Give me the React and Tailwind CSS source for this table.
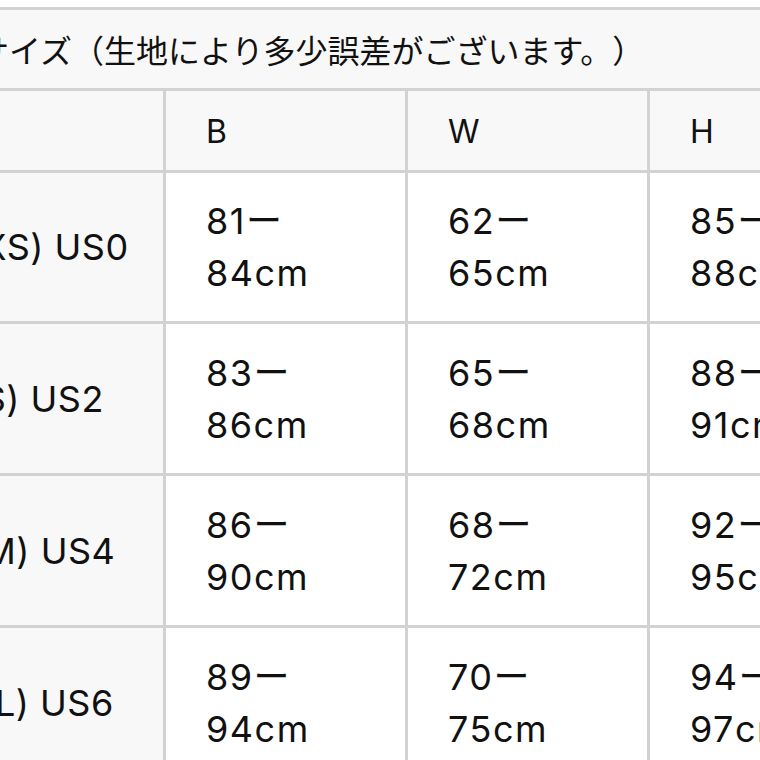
export default function App() {
  const rows = [
    { label: "(XS) US0", shift: "pl-[10px]", b: ["81ー", "84cm"], w: ["62ー", "65cm"], h: ["85ー", "88cm"] },
    { label: "(S) US2", shift: "pr-[14px]", b: ["83ー", "86cm"], w: ["65ー", "68cm"], h: ["88ー", "91cm"] },
    { label: "(M) US4", shift: "pr-[2px]", b: ["86ー", "90cm"], w: ["68ー", "72cm"], h: ["92ー", "95cm"] },
    { label: "(L) US6", shift: "pl-[8px]", b: ["89ー", "94cm"], w: ["70ー", "75cm"], h: ["94ー", "97cm"] },
  ];
  const heights = ["h-[148px]", "h-[149px]", "h-[149px]", "h-[149px]"];
  const font = "font-['Inter','Noto_Sans_CJK_JP',sans-serif]";
  return (
    <div className="w-[760px] h-[760px] overflow-hidden bg-white">
      <div className="pt-[7px] ml-[-79px]">
        <div
          className={`grid grid-cols-[239px_239px_239px_239px] gap-[3px] bg-[#d2d2d2] border-[3px] border-[#d2d2d2] w-[971px] text-[#111] ${font}`}
        >
          <div className="col-span-4 h-[78px] bg-[#f8f8f8] flex items-center pl-[53px] text-[32px] font-['Noto_Sans_CJK_JP',sans-serif] leading-none [text-spacing-trim:space-all]">
            サイズ（生地により多少誤差がございます。）
          </div>
          <div className="h-[79px] bg-[#f8f8f8]" />
          {["B", "W", "H"].map((t) => (
            <div key={t} className="h-[79px] bg-[#f8f8f8] flex items-center pl-[40px] text-[32px] pt-[3px]">
              {t}
            </div>
          ))}
          {rows.map((r, i) => (
            <>
              <div
                key={r.label}
                className={`${heights[i]} ${r.shift} bg-[#f8f8f8] flex items-center justify-center text-[36px] tracking-[0.5px]`}
              >
                {r.label}
              </div>
              {[r.b, r.w, r.h].map((v, j) => (
                <div
                  key={i + "-" + j}
                  className={`${heights[i]} bg-white flex items-center pl-[40px] text-[36px] leading-[52px] tracking-[1.5px]`}
                >
                  <div>
                    {v[0]}
                    <br />
                    {v[1]}
                  </div>
                </div>
              ))}
            </>
          ))}
        </div>
      </div>
    </div>
  );
}
